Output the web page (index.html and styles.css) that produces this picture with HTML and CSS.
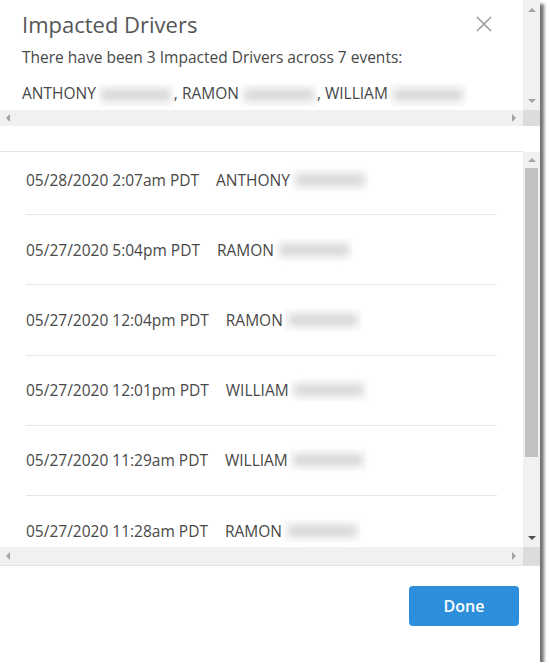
FILE: index.html
```html
<!DOCTYPE html>
<html lang="en">
<head>
  <meta charset="UTF-8">
  <meta name="viewport" content="width=device-width, initial-scale=1">
  <title>Impacted Drivers</title>
  <link rel="stylesheet" href="styles.css">
</head>
<body>

  <div class="modal">
    <div class="summary">
      <div class="pane">
        <div class="summary-view">
          <div class="modal-head">
            <h2 class="modal-title">Impacted Drivers</h2>
            <button class="close" aria-label="Close">
              <svg width="16" height="16" viewBox="0 0 16 16"><path d="M1 1L15 15M15 1L1 15" stroke="#9a9a9a" stroke-width="1.5" fill="none"/></svg>
            </button>
          </div>
          <p class="summary-text">There have been 3 Impacted Drivers across 7 events:</p>
          <p class="summary-names">ANTHONY<span class="redact"></span>, RAMON<span class="redact"></span>, WILLIAM<span class="redact"></span></p>
        </div>
        <div class="vbar">
          <span class="arrow up"></span>
          <span class="arrow down"></span>
        </div>
      </div>
      <div class="hbar-row">
        <div class="hbar"><span class="arrow left"></span><span class="arrow right"></span></div>
        <div class="corner"></div>
      </div>
    </div>

    <!-- event list -->
    <div class="events">
      <div class="pane events-pane">
        <div class="events-view">
          <ul class="event-list">
            <li><span class="when">05/28/2020 2:07am PDT</span><span class="who">ANTHONY</span><span class="redact"></span></li>
            <li><span class="when">05/27/2020 5:04pm PDT</span><span class="who">RAMON</span><span class="redact"></span></li>
            <li><span class="when">05/27/2020 12:04pm PDT</span><span class="who">RAMON</span><span class="redact"></span></li>
            <li><span class="when">05/27/2020 12:01pm PDT</span><span class="who">WILLIAM</span><span class="redact"></span></li>
            <li><span class="when">05/27/2020 11:29am PDT</span><span class="who">WILLIAM</span><span class="redact"></span></li>
            <li><span class="when">05/27/2020 11:28am PDT</span><span class="who">RAMON</span><span class="redact"></span></li>
          </ul>
        </div>
        <div class="vbar events-vbar">
          <span class="arrow up"></span>
          <span class="thumb"></span>
          <span class="arrow down dark"></span>
        </div>
      </div>
      <div class="hbar-row">
        <div class="hbar"><span class="arrow left"></span><span class="arrow right"></span></div>
        <div class="corner"></div>
      </div>
    </div>

    <div class="modal-foot">
      <button class="btn-done">Done</button>
    </div>
  </div>

</body>
</html>
```

FILE: styles.css
```css
/* reset */
* { margin:0; padding:0; box-sizing:border-box; }
body { font-family: "Open Sans", sans-serif; background:#fff; color:#484848; }

/* dialog box */
.modal {
  width: 540px;
  height: 662px;
  background: #fff;
  box-shadow: 4px 4px 3px rgba(0,0,0,.55);
  display: flex;
  flex-direction: column;
}

/* shared scroll pane bits */
.pane { display: flex; }
.vbar {
  width: 17px;
  background: #f1f1f1;
  display: flex;
  flex-direction: column;
  align-items: center;
  justify-content: space-between;
  padding: 8px 0 7px;
}
.hbar-row { display: flex; height: 16px; }
.hbar {
  flex: 1;
  background: #f1f1f1;
  display: flex;
  align-items: center;
  justify-content: space-between;
  padding: 0 7px 0 6px;
}
.corner { width: 17px; background: #dcdcdc; }

.arrow { width: 0; height: 0; display: block; }
.arrow.up { border-left: 4px solid transparent; border-right: 4px solid transparent; border-bottom: 4px solid #a3a3a3; }
.arrow.down { border-left: 4px solid transparent; border-right: 4px solid transparent; border-top: 4px solid #a3a3a3; }
.arrow.down.dark { border-top-color: #505050; }
.arrow.left { border-top: 4px solid transparent; border-bottom: 4px solid transparent; border-right: 4px solid #a3a3a3; }
.arrow.right { border-top: 4px solid transparent; border-bottom: 4px solid transparent; border-left: 4px solid #a3a3a3; }

/* blurred surname */
.redact {
  display: inline-flex;
  align-items: center;
  width: 76px;
  height: 22px;
  margin: -4px 0 -4px 2px;
  padding: 0 3px;
  vertical-align: middle;
  background: #fbfbfb;
}
.redact::before {
  content: "";
  flex: 1;
  height: 12px;
  border-radius: 5px;
  background: #d9d9d9;
  filter: blur(3.5px);
}

/* summary */
.summary { height: 126px; display: flex; flex-direction: column; }
.summary .pane { height: 110px; }
.summary-view { flex: 1; padding: 9px 0 0 22px; overflow: hidden; }
.modal-head { display: flex; justify-content: space-between; align-items: flex-start; }
.modal-title { font-size: 22px; font-weight: 400; line-height: 30px; color: #555; }
.close {
  border: none;
  background: none;
  margin: 7px 31px 0 0;
  width: 16px;
  height: 16px;
  cursor: pointer;
}
.close svg { display: block; }
.summary-text { font-size: 15.5px; line-height: 20px; margin-top: 8px; }
.summary-names { font-size: 15.5px; line-height: 20px; margin-top: 16px; }

/* events */
.events { margin-top: 25px; display: flex; flex-direction: column; border-bottom: 1px solid #e2e2e2; }
.events-pane { height: 396px; }
.events-view { flex: 1; overflow: hidden; border-top: 1px solid #e2e2e2; }
.events-vbar { margin-top: 1px; padding-top: 6px; justify-content: flex-start; }
.thumb { width: 13px; height: 289px; background: #c1c1c1; margin: 6px 0 auto; }
.events .hbar-row { height: 18px; }

.event-list { list-style: none; margin: -7px 26px 0; }
.event-list li {
  display: flex;
  align-items: center;
  height: 70.2px;
  font-size: 15.5px;
  border-bottom: 1px solid #e6e6e6;
  white-space: nowrap;
}
.who { margin-left: 17px; }

/* footer */
.modal-foot { flex: 1; display: flex; justify-content: flex-end; align-items: flex-start; padding: 20px 21px 0; }
.btn-done {
  width: 110px;
  height: 40px;
  border: none;
  border-radius: 4px;
  background: #2d8fdb;
  color: #fff;
  font-family: "Open Sans", sans-serif;
  font-size: 16px;
  font-weight: 600;
  cursor: pointer;
}
```
